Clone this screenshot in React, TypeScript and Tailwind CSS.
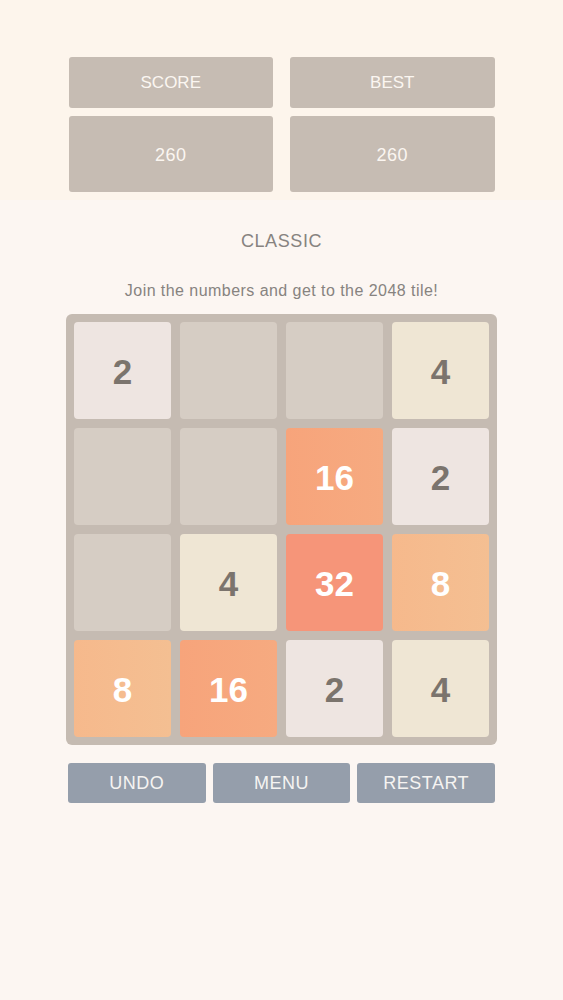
import React from "react";

const tiles: (number | null)[][] = [
  [2, null, null, 4],
  [null, null, 16, 2],
  [null, 4, 32, 8],
  [8, 16, 2, 4],
];

function tileClass(v: number | null): string {
  switch (v) {
    case 2:
      return "bg-[#eee5e1] text-[#7b746d]";
    case 4:
      return "bg-[#efe6d4] text-[#7b746d]";
    case 8:
      return "bg-gradient-to-r from-[#f6b98c] to-[#f4bf92] text-white";
    case 16:
      return "bg-gradient-to-r from-[#f7a47b] to-[#f6aa80] text-white";
    case 32:
      return "bg-[#f69579] text-white";
    default:
      return "bg-[#d6cdc4]";
  }
}

export default function App() {
  return (
    <div
      className="min-h-[1000px] w-full bg-[#fcf6f2] flex flex-col"
      style={{ fontFamily: '"Liberation Sans", Arial, sans-serif' }}
    >
      <div className="bg-[#fdf5ec] h-[200px] pt-[57px] flex justify-center">
        <div className="w-[426px] grid grid-cols-2 gap-x-[17px]">
          {["SCORE", "BEST"].map((l) => (
            <div key={l} className="flex flex-col gap-[8px]">
              <div className="h-[51px] bg-[#c6bcb3] rounded-[3px] flex items-center justify-center text-[#fbf6f1] text-[17px]">
                {l}
              </div>
              <div className="h-[76px] pt-[2px] bg-[#c6bcb3] rounded-[3px] flex items-center justify-center text-[#fbf6f1] text-[18px] tracking-[0.5px]">
                260
              </div>
            </div>
          ))}
        </div>
      </div>
      <div className="flex flex-col items-center">
        <div className="mt-[30px] text-[18px] leading-[22px] tracking-[0.6px] text-[#878380]">CLASSIC</div>
        <div className="mt-[30px] text-[16px] leading-[18px] tracking-[0.45px] text-[#878380]">
          Join the numbers and get to the 2048 tile!
        </div>
        <div className="mt-[14px] w-[431px] h-[431px] bg-[#c5bbb2] rounded-[6px] p-[8px] grid grid-cols-4 grid-rows-4 gap-[9px]">
          {tiles.flat().map((v, i) => (
            <div
              key={i}
              className={`rounded-[4px] flex items-center justify-center pt-[3px] text-[35px] font-bold ${tileClass(v)}`}
            >
              {v ?? ""}
            </div>
          ))}
        </div>
        <div className="mt-[18px] w-[427px] grid grid-cols-3 gap-[7px]">
          {["UNDO", "MENU", "RESTART"].map((b) => (
            <div
              key={b}
              className="h-[40px] bg-[#959eab] rounded-[3px] flex items-center justify-center text-[#f6f4f2] text-[18px] tracking-[0.5px]"
            >
              {b}
            </div>
          ))}
        </div>
      </div>
    </div>
  );
}
